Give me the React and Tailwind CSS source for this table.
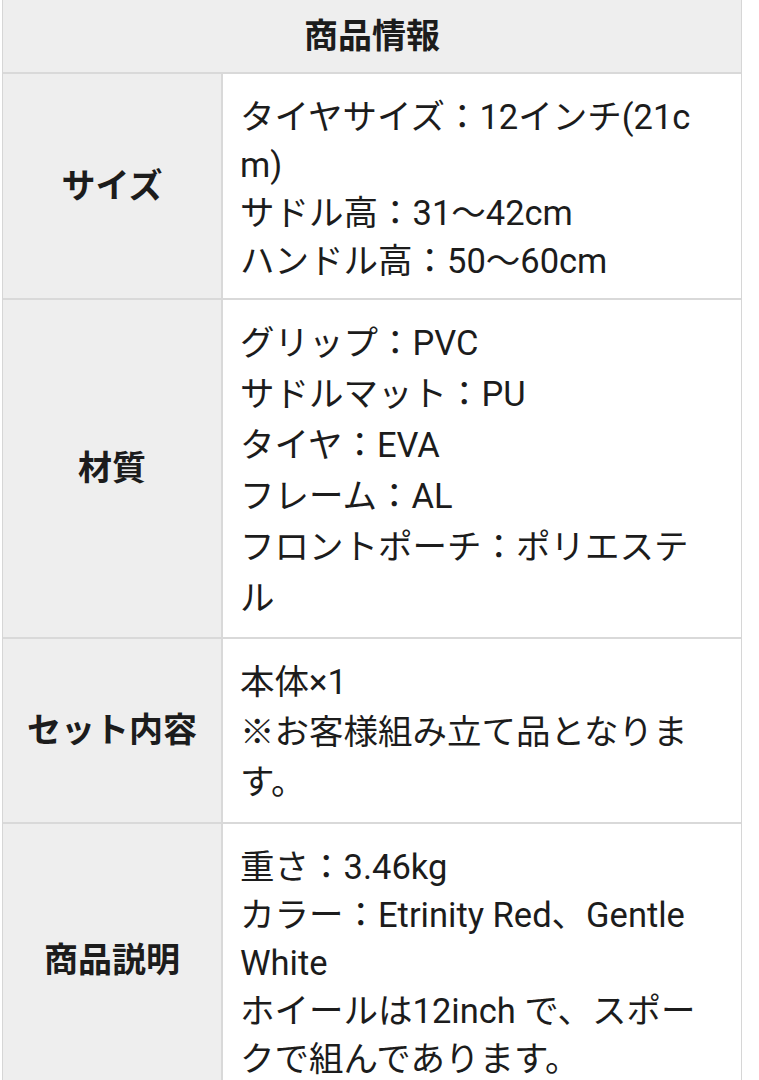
import React from 'react'

const rows = [
  {
    label: 'サイズ',
    lead: 'leading-[48px]',
    pad: 'pt-[19px] pb-[13px]',
    lines: ['タイヤサイズ：12インチ(21c', 'm)', 'サドル高：31〜42cm', 'ハンドル高：50〜60cm'],
  },
  {
    label: '材質',
    lead: 'leading-[51px]',
    pad: 'pt-[18px] pb-[13px]',
    lines: ['グリップ：PVC', 'サドルマット：PU', 'タイヤ：EVA', 'フレーム：AL', 'フロントポーチ：ポリエステ', 'ル'],
  },
  {
    label: 'セット内容',
    lead: 'leading-[50px]',
    pad: 'pt-[18px] pb-[15px]',
    lines: ['本体×1', '※お客様組み立て品となりま', 'す。'],
  },
  {
    label: '商品説明',
    lead: 'leading-[48px]',
    pad: 'pt-[19px] pb-[13px]',
    lines: ['重さ：3.46kg', 'カラー：Etrinity Red、Gentle', 'White', 'ホイールは12inch で、スポー', 'クで組んであります。'],
  },
]

export default function App(){
  return (
    <div className="w-[759px] h-[1080px] overflow-hidden bg-white text-[#1c1c1c]" style={{fontFamily: 'Roboto, "Noto Sans CJK JP", sans-serif'}}>
      <div className="ml-[2px] w-[740px] border-l border-r border-[#d6d6d6]">
        <div className="h-[74px] bg-[#eeeeee] border-b-2 border-[#d9d9d9] flex items-center justify-center">
          <span className="text-[34px] font-bold">商品情報</span>
        </div>
        {rows.map((r, i) => (
          <div key={i} className="grid grid-cols-[220px_1fr] border-b-2 border-[#d9d9d9]">
            <div className="bg-[#eeeeee] border-r-2 border-[#d9d9d9] flex items-center justify-center">
              <span className="text-[34px] font-bold">{r.label}</span>
            </div>
            <div className={`bg-white pl-[17px] text-[34.5px] whitespace-nowrap ${r.lead} ${r.pad}`}>
              {r.lines.map((l, j) => <div key={j}>{l}</div>)}
            </div>
          </div>
        ))}
      </div>
    </div>
  )
}
